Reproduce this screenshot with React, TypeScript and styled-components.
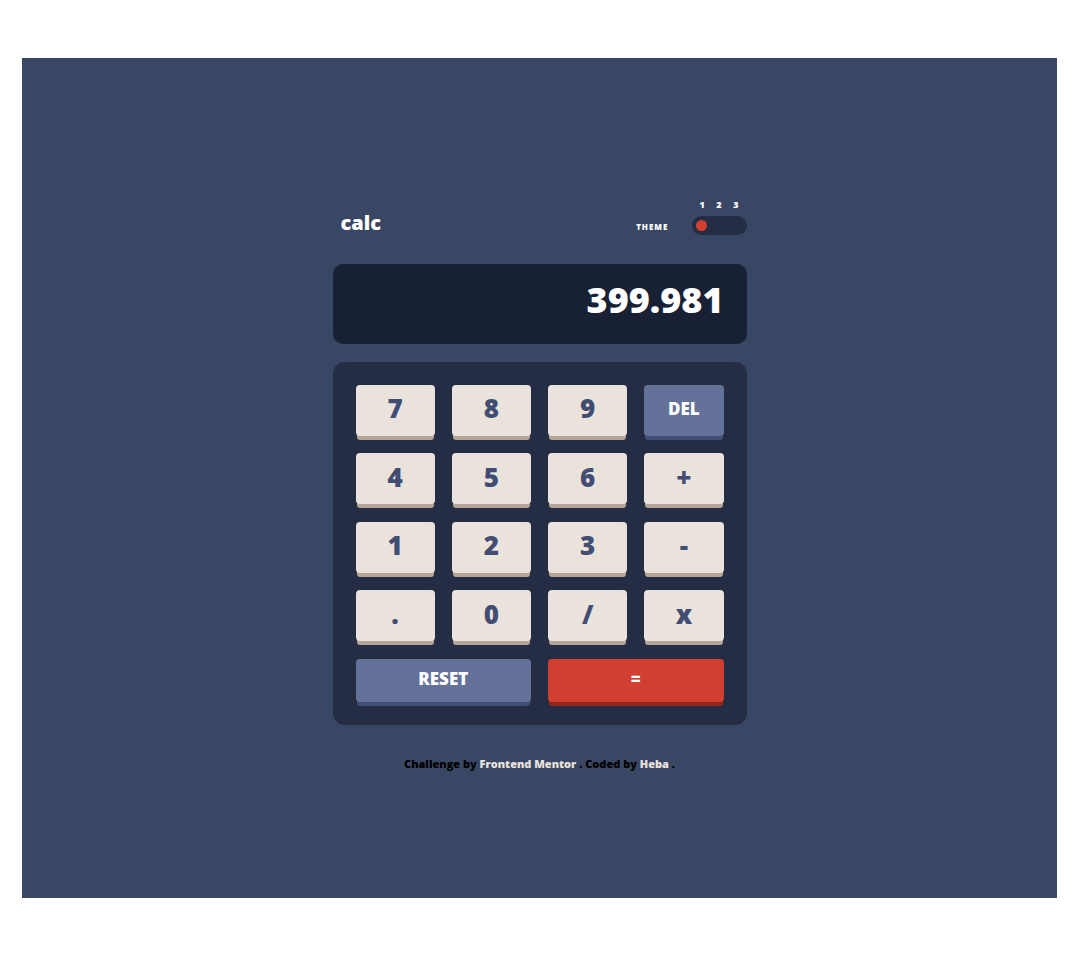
import React, { useState } from "react";
import styled, { createGlobalStyle, css } from "styled-components";

const GlobalStyle = createGlobalStyle`
  *, *::before, *::after { box-sizing: border-box; }
  body {
    margin: 0;
    background: #ffffff;
    font-family: "Open Sans", Lato, sans-serif;
    font-weight: 800;
  }
  button, input { font: inherit; }
`;

const Page = styled.div`
  min-height: 100vh;
  padding: 58px 22px 57px;
  display: flex;
`;

const Frame = styled.main`
  flex: 1;
  display: flex;
  flex-direction: column;
  align-items: center;
  justify-content: center;
  padding: 14px 0 0;
  background: #3a4764;
`;

const Calculator = styled.div`
  width: 40%;
  min-width: 320px;
`;

const Header = styled.header`
  display: flex;
  align-items: flex-end;
  padding-left: 8px;
  margin-bottom: 29px;
  color: #ffffff;
`;

const Logo = styled.h1`
  flex: 1;
  margin: 0;
  font-size: 20px;
  font-weight: 800;
  line-height: 24px;
`;

const ThemeLabel = styled.label`
  margin-right: 23px;
  font-size: 8px;
  line-height: 16px;
  letter-spacing: 1px;
`;

const ThemePicker = styled.div`
  width: 55px;
`;

const ThemeNumbers = styled.div`
  display: flex;
  justify-content: space-between;
  padding: 0 8px;
  font-size: 9px;
  line-height: 12px;
  margin-bottom: 5px;
`;

const ThemeSlider = styled.input`
  appearance: none;
  display: block;
  width: 100%;
  height: 19px;
  margin: 0;
  padding: 0 4px;
  border-radius: 10px;
  background: #252d44;
  cursor: pointer;

  &::-webkit-slider-thumb {
    appearance: none;
    width: 11px;
    height: 11px;
    border-radius: 50%;
    background: #d03f2f;
  }
`;

const Display = styled.input`
  display: block;
  width: 100%;
  height: 80px;
  padding: 0 23px 8px;
  border: 0;
  border-radius: 10px;
  background: #182034;
  color: #ffffff;
  font-size: 36px;
  text-align: right;
`;

const Keypad = styled.section`
  margin-top: 18px;
  padding: 23px;
  border-radius: 12px;
  background: #252d44;
`;

const Keys = styled.div`
  display: grid;
  grid-template-columns: repeat(4, 1fr);
  column-gap: 17px;
  align-content: space-between;
  min-height: 317px;
`;

type Tone = "light" | "blue" | "red";

const tones = {
  light: css`
    background: #eae3dc;
    color: #414d73;
    box-shadow: 0 5px 0 -1px #b4a597;
    font-size: 26px;
    padding-bottom: 4px;
  `,
  blue: css`
    background: #647198;
    color: #ffffff;
    box-shadow: 0 5px 0 -1px #414e73;
    font-size: 17px;
    padding-bottom: 3px;
  `,
  red: css`
    background: #d03f2f;
    color: #ffffff;
    box-shadow: 0 5px 0 -1px #93261a;
    font-size: 17px;
    padding-bottom: 3px;
  `,
};

const Key = styled.button<{ $tone: Tone; $wide?: boolean }>`
  height: ${(p) => (p.$wide ? 43 : 51)}px;
  grid-column: span ${(p) => (p.$wide ? 2 : 1)};
  border: 0;
  padding: 0;
  border-radius: 4px;
  line-height: 32px;
  cursor: pointer;
  ${(p) => tones[p.$tone]}
`;

const Attribution = styled.footer`
  margin-top: 31px;
  font-size: 11px;
  line-height: 16px;
  text-align: center;
  color: #000000;
`;

const Link = styled.a`
  color: #eae3dc;
  text-decoration: none;
`;

const keys: { label: string; tone?: Tone; wide?: boolean }[] = [
  { label: "7" }, { label: "8" }, { label: "9" }, { label: "DEL", tone: "blue" },
  { label: "4" }, { label: "5" }, { label: "6" }, { label: "+" },
  { label: "1" }, { label: "2" }, { label: "3" }, { label: "-" },
  { label: "." }, { label: "0" }, { label: "/" }, { label: "x" },
  { label: "RESET", tone: "blue", wide: true },
  { label: "=", tone: "red", wide: true },
];

export default function App() {
  const [value, setValue] = useState("399.981");
  const [theme, setTheme] = useState(1);

  const press = (label: string) => {
    if (label === "RESET") setValue("");
    else if (label === "DEL") setValue((v) => v.slice(0, -1));
    else if (label !== "=") setValue((v) => v + label);
  };

  return (
    <>
      <GlobalStyle />
      <Page>
        <Frame>
          <Calculator>
            <Header>
              <Logo>calc</Logo>
              <ThemeLabel htmlFor="theme">THEME</ThemeLabel>
              <ThemePicker>
                <ThemeNumbers>
                  <span>1</span>
                  <span>2</span>
                  <span>3</span>
                </ThemeNumbers>
                <ThemeSlider
                  id="theme"
                  type="range"
                  min={1}
                  max={3}
                  value={theme}
                  onChange={(e) => setTheme(Number(e.target.value))}
                />
              </ThemePicker>
            </Header>
            <Display type="text" aria-label="Result" readOnly value={value} />
            <Keypad>
              <Keys>
                {keys.map(({ label, tone = "light", wide }) => (
                  <Key key={label} type="button" $tone={tone} $wide={wide} onClick={() => press(label)}>
                    {label}
                  </Key>
                ))}
              </Keys>
            </Keypad>
            <Attribution>
              Challenge by <Link href="#frontend-mentor">Frontend Mentor</Link> . Coded by{" "}
              <Link href="#heba">Heba</Link> .
            </Attribution>
          </Calculator>
        </Frame>
      </Page>
    </>
  );
}
